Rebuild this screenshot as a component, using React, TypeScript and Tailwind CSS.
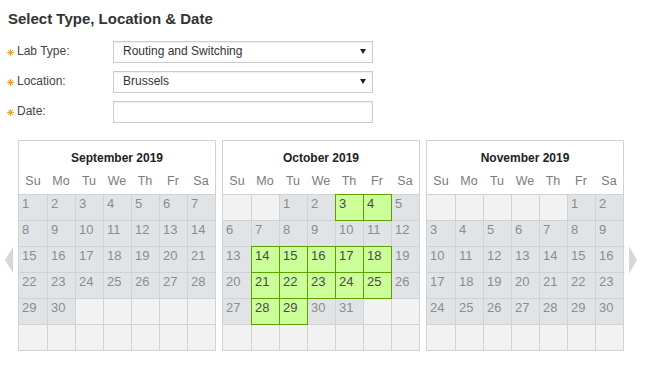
import React from "react";

type Cell = { day?: number; open?: boolean };

const WEEKDAYS = ["Su", "Mo", "Tu", "We", "Th", "Fr", "Sa"];

// builds 6 rows x 7 cols for a month
function buildMonth(offset: number, days: number, open: number[] = []): Cell[] {
	const cells: Cell[] = [];
	for (let i = 0; i < 42; i++) {
		const d = i - offset + 1;
		if (d < 1 || d > days) cells.push({});
		else cells.push({ day: d, open: open.includes(d) });
	}
	return cells;
}

const MONTHS = [
	{ title: "September 2019", cells: buildMonth(0, 30) },
	{ title: "October 2019", cells: buildMonth(2, 31, [3, 4, 14, 15, 16, 17, 18, 21, 22, 23, 24, 25, 28, 29]) },
	{ title: "November 2019", cells: buildMonth(5, 30) },
];

function Star() {
	return (
		<svg width="7" height="7" viewBox="0 0 7 7" className="mt-[2px] shrink-0">
			<g stroke="#f0a020" strokeWidth="1" strokeLinecap="round">
				<line x1="3.5" y1="0.5" x2="3.5" y2="6.5" />
				<line x1="0.5" y1="3.5" x2="6.5" y2="3.5" />
				<line x1="1.4" y1="1.4" x2="5.6" y2="5.6" />
				<line x1="5.6" y1="1.4" x2="1.4" y2="5.6" />
			</g>
		</svg>
	);
}

function Caret() {
	return (
		<svg width="6" height="5" viewBox="0 0 6 5" className="shrink-0">
			<polygon points="0,0 6,0 3,5" fill="#222" />
		</svg>
	);
}

function FormRow({ label, value, select }: { label: string; value?: string; select?: boolean }) {
	return (
		<div className="flex items-start h-[22px]">
			<div className="w-[113px] pl-[7px] mt-[1px] h-[18px] flex items-center gap-[3px] text-[12px] leading-[18px] text-[#444]">
				<Star />
				<span>{label}</span>
			</div>
			<div className="w-[260px] h-[22px] border border-[#cccccc] bg-white flex items-start justify-between pl-[9px] pr-[6px] shadow-[inset_0_1px_2px_rgba(0,0,0,0.07)]">
				<span className="text-[12px] leading-[18px] text-[#333]">{value}</span>
				{select && (
					<div className="mt-[7px]">
						<Caret />
					</div>
				)}
			</div>
		</div>
	);
}

function Month({ title, cells }: { title: string; cells: Cell[] }) {
	return (
		<div className="w-[198px] border border-[#d0d3d6] bg-white">
			<div className="h-[30px] pt-[10px] text-center text-[12px] leading-[15px] font-bold text-[#222]">{title}</div>
			<div className="grid grid-cols-7 h-[23px] pt-[3px] text-center text-[12.5px] leading-[15px] text-[#7b7b7b]">
				{WEEKDAYS.map((w) => (
					<div key={w}>{w}</div>
				))}
			</div>
			<div className="grid grid-cols-7 auto-rows-[26px]">
				{cells.map((c, i) => {
					const firstCol = i % 7 === 0;
					let cls = "pl-[3px] pt-px text-[13px] leading-[15px] border-t border-[#d0d3d6] ";
					if (!firstCol) cls += "border-l ";
					if (c.open) {
						cls = "pl-[3px] pt-px text-[13px] leading-[15px] relative z-10 -mr-px -mb-px border border-[#5ca100] bg-[#ccff99] text-[#4a4a4a]";
					} else if (c.day) {
						cls += "bg-[#e1e4e7] text-[#8c8c8c]";
					} else {
						cls += "bg-[#f2f2f2]";
					}
					return (
						<div key={i} className={cls}>
							{c.day ?? ""}
						</div>
					);
				})}
			</div>
		</div>
	);
}

export default function App() {
	return (
		<div className="w-[648px] h-[366px] overflow-hidden bg-white font-['Liberation_Sans',Arial,sans-serif]">
			<h2 className="pl-[8px] pt-[10px] text-[15px] leading-[18px] font-bold text-[#333]">
				Select Type, Location &amp; Date
			</h2>

			<div className="mt-[13px] flex flex-col gap-[8px]">
				<FormRow label="Lab Type:" value="Routing and Switching" select />
				<FormRow label="Location:" value="Brussels" select />
				<FormRow label="Date:" />
			</div>

			<div className="mt-[17px] flex items-start pl-[5px]">
				<svg width="8" height="26" viewBox="0 0 8 26" className="mt-[107px] shrink-0">
					<polygon points="8,0 0,13 8,26" fill="#d5d8db" />
				</svg>
				<div className="ml-[5px] flex gap-[6px]">
					{MONTHS.map((m) => (
						<Month key={m.title} title={m.title} cells={m.cells} />
					))}
				</div>
				<svg width="8" height="28" viewBox="0 0 8 28" className="ml-[5px] mt-[106px] shrink-0">
					<polygon points="0,0 8,14 0,28" fill="#d5d8db" />
				</svg>
			</div>
		</div>
	);
}
